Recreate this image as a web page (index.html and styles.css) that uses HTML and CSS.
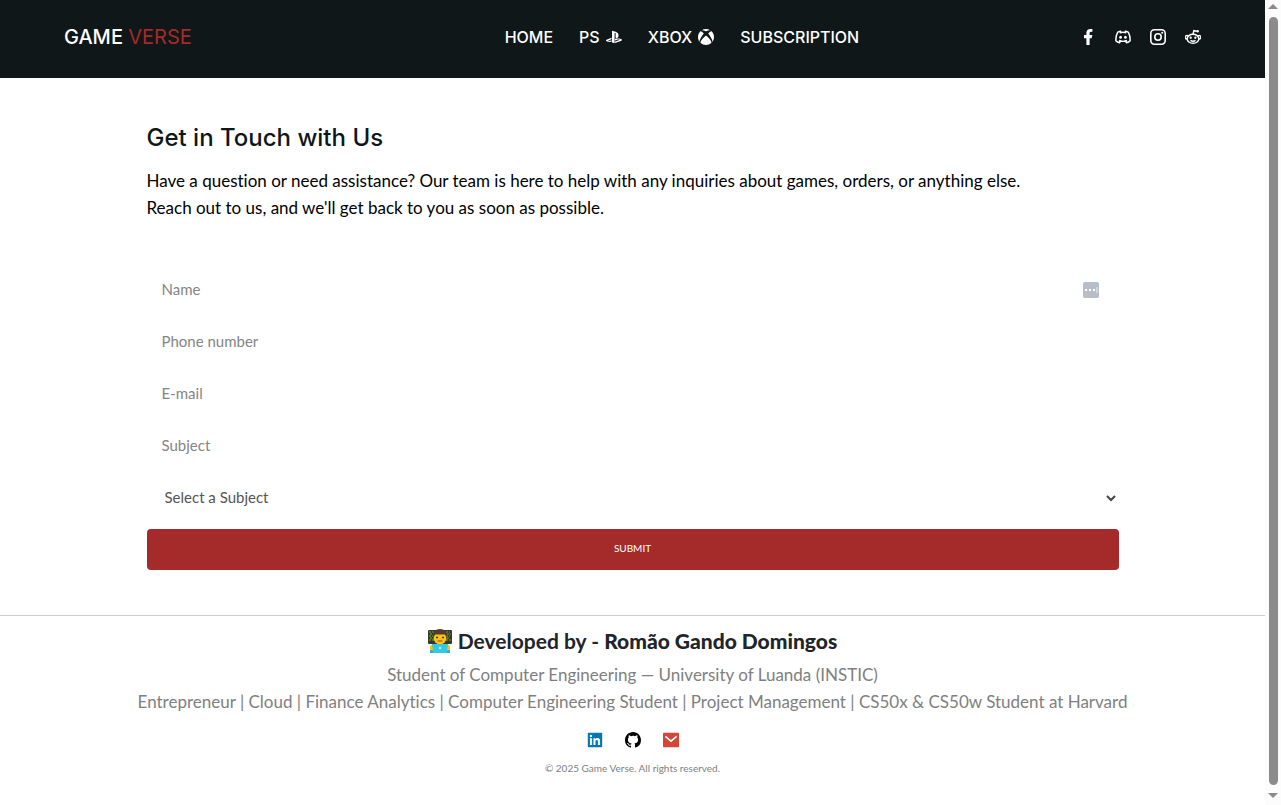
FILE: index.html
```html
<!DOCTYPE html>
<html lang="en">
<head>
<meta charset="utf-8">
<title>Game Verse</title>
<link rel="stylesheet" href="styles.css">
</head>
<body>
<div class="page">
  <header class="header">
    <a class="logo" href="#">GAME <span class="logo-accent">VERSE</span></a>
    <nav class="nav">
      <a href="#">HOME</a>
      <a href="#">PS
        <svg class="icon" viewBox="0 0 24 24" aria-hidden="true"><path d="M8.984 2.596v17.547l3.915 1.261V6.688c0-.69.304-1.151.794-.991.636.18.76.814.76 1.505v5.875c2.441 1.193 4.362-.002 4.362-3.152 0-3.237-1.126-4.675-4.438-5.827-1.307-.448-3.728-1.186-5.39-1.502zm4.656 16.241l6.296-2.275c.715-.258.826-.625.246-.818-.586-.192-1.637-.139-2.357.123l-4.205 1.5V14.98l.24-.085s1.201-.42 2.913-.615c1.696-.18 3.785.03 5.437.661 1.848.601 2.04 1.472 1.576 2.072-.465.6-1.622 1.036-1.622 1.036l-8.544 3.107V18.86zM1.807 18.6c-1.9-.545-2.214-1.668-1.352-2.32.801-.586 2.16-1.052 2.16-1.052l5.615-2.013v2.313L4.205 17c-.705.271-.825.632-.239.826.586.195 1.637.15 2.343-.12L8.247 17v2.074c-.12.03-.256.044-.39.073-1.939.331-3.996.196-6.038-.479z"/></svg></a>
      <a href="#">XBOX
        <svg class="icon" viewBox="0 0 24 24" aria-hidden="true"><path d="M4.102 21.033C6.211 22.881 8.977 24 12 24c3.026 0 5.789-1.119 7.902-2.967 1.877-1.912-4.316-8.709-7.902-11.417-3.582 2.708-9.779 9.505-7.898 11.417zm11.16-14.406c2.5 2.961 7.484 10.313 6.076 12.912C23.002 17.48 24 14.861 24 12.004c0-3.34-1.365-6.362-3.57-8.536 0 0-.027-.022-.082-.042-.063-.022-.152-.045-.281-.045-.592 0-1.985.434-4.805 3.246zM3.654 3.426c-.057.02-.082.041-.086.042C1.365 5.642 0 8.664 0 12.004c0 2.854.998 5.473 2.661 7.533-1.401-2.605 3.579-9.951 6.08-12.91-2.82-2.813-4.216-3.245-4.806-3.245-.131 0-.223.021-.281.046v-.002zM12 3.551S9.055 1.828 6.755 1.746c-.903-.033-1.454.295-1.521.339C7.379.646 9.659 0 11.984 0H12c2.334 0 4.605.646 6.766 2.085-.068-.046-.615-.372-1.52-.339C14.946 1.828 12 3.545 12 3.545v.006z"/></svg></a>
      <a href="#">SUBSCRIPTION</a>
    </nav>
    <div class="socials">
      <a href="#" aria-label="Facebook"><svg class="icon" viewBox="2 2 20 20"><path d="M14 13.5h2.5l1-4H14v-2c0-1.03 0-2 2-2h1.5V2.14c-.326-.043-1.557-.14-2.857-.14C11.928 2 10 3.657 10 6.7v2.8H7v4h3V22h4v-8.5z"/></svg></a>
      <a href="#" aria-label="Discord"><svg class="icon line" viewBox="1 1 22 22"><path d="M9 5.2 8.6 4.2C6.600 4.500 5.400 5 4.600 5.600 3 8.500 2 12 2.200 17.200 3.500 18.600 5.300 19.500 7.300 19.800L8.500 17.600M15 5.200 15.400 4.200C17.400 4.500 18.600 5 19.400 5.600 21 8.500 22 12 21.800 17.200 20.500 18.600 18.700 19.500 16.700 19.800L15.500 17.600M7.500 6.300Q12 4.600 16.500 6.300M6.500 16.800Q12 19.200 17.500 16.800"/><ellipse class="solid" cx="8.700" cy="12.400" rx="1.900" ry="2.100"/><ellipse class="solid" cx="15.300" cy="12.400" rx="1.900" ry="2.100"/></svg></a>
      <a href="#" aria-label="Instagram"><svg class="icon line" viewBox="2 2 20 20"><rect x="3" y="3" width="18" height="18" rx="4.500"/><circle cx="12" cy="12" r="4"/><circle class="solid" cx="17.300" cy="6.700" r="1.300"/></svg></a>
      <a href="#" aria-label="Reddit"><svg class="icon line" viewBox="1 1 22 22"><path d="M12 8.500 13.200 3.300 17.300 4.200M5.200 10.800A2.300 2.300 0 1 0 4 14.500M18.800 10.800A2.300 2.300 0 1 1 20 14.500"/><ellipse cx="12" cy="14.500" rx="8" ry="6.200"/><circle class="solid" cx="18.400" cy="4.200" r="1.700"/><circle class="solid" cx="8.800" cy="13" r="1.600"/><circle class="solid" cx="15.200" cy="13" r="1.600"/><path d="M8.500 16.700Q12 19 15.500 16.700"/></svg></a>
    </div>
  </header>

  <main class="contact">
    <h1>Get in Touch with Us</h1>
    <p class="intro">Have a question or need assistance? Our team is here to help with any inquiries about games, orders, or anything else.<br>Reach out to us, and we'll get back to you as soon as possible.</p>
    <form class="form">
      <div class="field">
        <input type="text" placeholder="Name" aria-label="Name">
        <svg class="autofill" viewBox="0 0 16 16" aria-hidden="true"><rect width="16" height="16" rx="2" fill="#b7bec9"/><path d="M2 7h2v2H2zM6 7h2v2H6zM10 7h2v2h-2z" fill="#fff"/><path d="M13 5h2v6h-2z" fill="#d3d8df"/></svg>
      </div>
      <div class="field"><input type="tel" placeholder="Phone number" aria-label="Phone number"></div>
      <div class="field"><input type="email" placeholder="E-mail" aria-label="E-mail"></div>
      <div class="field"><input type="text" placeholder="Subject" aria-label="Subject"></div>
      <div class="field">
        <select aria-label="Select a Subject"><option>Select a Subject</option></select>
        <svg class="chevron" viewBox="0 0 10 8" aria-hidden="true"><path d="M1 2l4 4 4-4"/></svg>
      </div>
      <button class="submit" type="submit">SUBMIT</button>
    </form>
  </main>

  <footer class="footer">
    <h2>
      <svg class="developer" viewBox="0 0 24 24" aria-hidden="true"><rect y="1" width="24" height="14" rx="1" fill="#34382f"/><path d="M1 3h5M2 5h3M1 7h4M2 9h3M1 11h5M18 3h4M19 5h4M18 7h4M19 9h3M18 11h5" stroke="#67b719" stroke-dasharray="2 1"/><path d="M2 24v-4q0-5 6-5h8q6 0 6 5v4z" fill="#28b9d2"/><circle cx="12" cy="9" r="6.500" fill="#fcc21b"/><path d="M5.300 9C4.500 3 7.500 0 12 0s7.500 3 6.700 9L17 5.500H7z" fill="#543930"/><path d="M8 8.500h2M14 8.500h2" stroke="#543930" stroke-width="1.500"/><path d="M9.500 12h5" stroke="#8a4d25"/><path d="M4 15h16l-1 9H5z" fill="#35c8e0"/><circle cx="12" cy="19" r="1.200" fill="#b8f0f5"/><path d="M2 18q0-2 2-2l1 5H2zM22 18q0-2-2-2l-1 5h3z" fill="#fcc21b"/></svg>
      <span>Developed by - <strong>Romão Gando Domingos</strong></span>
    </h2>
    <p>Student of Computer Engineering — University of Luanda (INSTIC)</p>
    <p>Entrepreneur | Cloud | Finance Analytics | Computer Engineering Student | Project Management | CS50x &amp; CS50w Student at Harvard</p>
    <div class="profiles">
      <a href="#" aria-label="LinkedIn"><svg class="icon" viewBox="2 2 20 20"><rect x="3" y="3" width="18" height="18" rx="1" fill="#0077b5"/><path fill="#fff" d="M18.335 18.339H15.670v-4.177c0-.996-.020-2.278-1.390-2.278-1.389 0-1.601 1.084-1.601 2.205v4.250h-2.666V9.750h2.560v1.170h.035c.358-.674 1.228-1.387 2.528-1.387 2.700 0 3.200 1.778 3.200 4.091v4.715zM7.003 8.575a1.546 1.546 0 0 1-1.548-1.549 1.548 1.548 0 1 1 1.547 1.549zm1.336 9.764H5.666V9.750H8.340v8.589z"/></svg></a>
      <a href="#" aria-label="GitHub"><svg class="icon" viewBox="2 2 20 20"><path fill="#000" d="M12 2C6.475 2 2 6.475 2 12a9.994 9.994 0 0 0 6.838 9.488c.5.087.687-.213.687-.476 0-.237-.013-1.024-.013-1.862-2.512.463-3.162-.612-3.362-1.175-.113-.288-.6-1.175-1.025-1.413-.35-.187-.85-.65-.013-.662.788-.013 1.350.725 1.538 1.025.9 1.512 2.338 1.087 2.912.825.088-.65.35-1.087.638-1.337-2.225-.25-4.550-1.113-4.550-4.938 0-1.088.387-1.987 1.025-2.688-.1-.25-.45-1.275.1-2.650 0 0 .837-.262 2.750 1.026a9.280 9.280 0 0 1 2.500-.338c.85 0 1.700.112 2.500.337 1.912-1.300 2.750-1.024 2.750-1.024.55 1.375.2 2.400.1 2.650.637.7 1.025 1.587 1.025 2.687 0 3.838-2.337 4.688-4.562 4.938.362.312.675.912.675 1.850 0 1.337-.013 2.412-.013 2.750 0 .262.188.574.688.474A10.016 10.016 0 0 0 22 12c0-5.525-4.475-10-10-10z"/></svg></a>
      <a href="#" aria-label="E-mail"><svg class="icon" viewBox="2 2 20 20"><rect x="2" y="3" width="20" height="18" rx="1" fill="#d44638"/><path d="M5 7.500l7 6 7-6" fill="none" stroke="#fff" stroke-width="2"/></svg></a>
    </div>
    <small>© 2025 Game Verse. All rights reserved.</small>
  </footer>
</div>
<div class="scrollbar" aria-hidden="true">
  <span class="arrow up"></span><span class="thumb"></span><span class="arrow down"></span>
</div>
</body>
</html>
```
FILE: styles.css
```css
* { box-sizing: border-box; }
body { margin: 0; display: flex; align-items: flex-start; background: #fff; color: #000; font-family: Lato, sans-serif; font-size: 17px; font-variant-ligatures: none; }
h1, h2, p { margin: 0; }
a { color: inherit; text-decoration: none; }
.page { flex: 1; min-width: 0; }
.icon { display: block; width: 16px; height: 16px; fill: currentColor; }
.line { fill: none; stroke: currentColor; stroke-width: 2; }
.solid { fill: currentColor; stroke: none; }

.header { display: flex; align-items: center; justify-content: space-between; padding: 24px 64px 28px; background: #0f1718; color: #fff; font-family: Inter, sans-serif; line-height: 26px; }
.logo { font-size: 20px; font-weight: 500; }
.logo-accent { color: #a52a2a; font-weight: 400; }
.nav { display: flex; gap: 26px; padding-left: 92px; font-size: 16px; font-weight: 500; }
.nav a { display: flex; align-items: center; gap: 6px; }
.socials { display: flex; gap: 19px; }

.contact { width: 100%; max-width: 1020px; margin: 0 auto; padding: 44px 24px 45px; }
h1 { color: #0f1718; font-family: Inter, sans-serif; font-size: 24px; font-weight: 500; line-height: 32px; }
.intro { margin-top: 13px; line-height: 27px; }
.form { display: grid; gap: 11px; margin-top: 48px; }
.field { position: relative; display: flex; align-items: center; }
.field input, .field select { width: 100%; height: 41px; border: 0; border-radius: 4px; background: transparent; padding: 0 15px 2px; font: 400 15px Lato, sans-serif; color: #333; appearance: none; }
.field select { padding: 0 18px 2px; color: #555; }
.field input::placeholder { color: #858585; opacity: 1; }
.autofill { position: absolute; right: 20px; width: 16px; height: 16px; }
.chevron { position: absolute; right: 3px; width: 10px; height: 8px; fill: none; stroke: #444; stroke-width: 2; pointer-events: none; }
.submit { height: 41px; border: 0; border-radius: 4px; padding: 0 0 3px; background: #a52a2a; color: #fff; font: 400 10px Lato, sans-serif; }

.footer { display: flex; flex-direction: column; align-items: center; padding: 11px 16px 24px; border-top: 1px solid #ccc; color: #808080; text-align: center; line-height: 27px; }
h2 { display: flex; align-items: center; gap: 6px; margin-bottom: 6px; color: #212529; font-size: 21px; font-weight: 700; line-height: 28px; }
h2 strong { font-weight: 900; }
.developer { width: 24px; height: 24px; }
.profiles { display: flex; gap: 22px; margin: 17px 0 12px; }
.footer small { font-size: 10px; line-height: 16px; }

.scrollbar { position: sticky; top: 0; display: flex; flex-direction: column; align-items: center; gap: 8px; flex: none; width: 16px; height: 100vh; padding: 4px 0 7px; background: #fcfcfc; }
.thumb { flex: 1; width: 9px; border-radius: 5px; background: #8b8b8b; }
.arrow { border: 5px solid transparent; }
.up { border-top: 0; border-bottom-color: #8b8b8b; }
.down { border-bottom: 0; border-top-color: #8b8b8b; }
```
